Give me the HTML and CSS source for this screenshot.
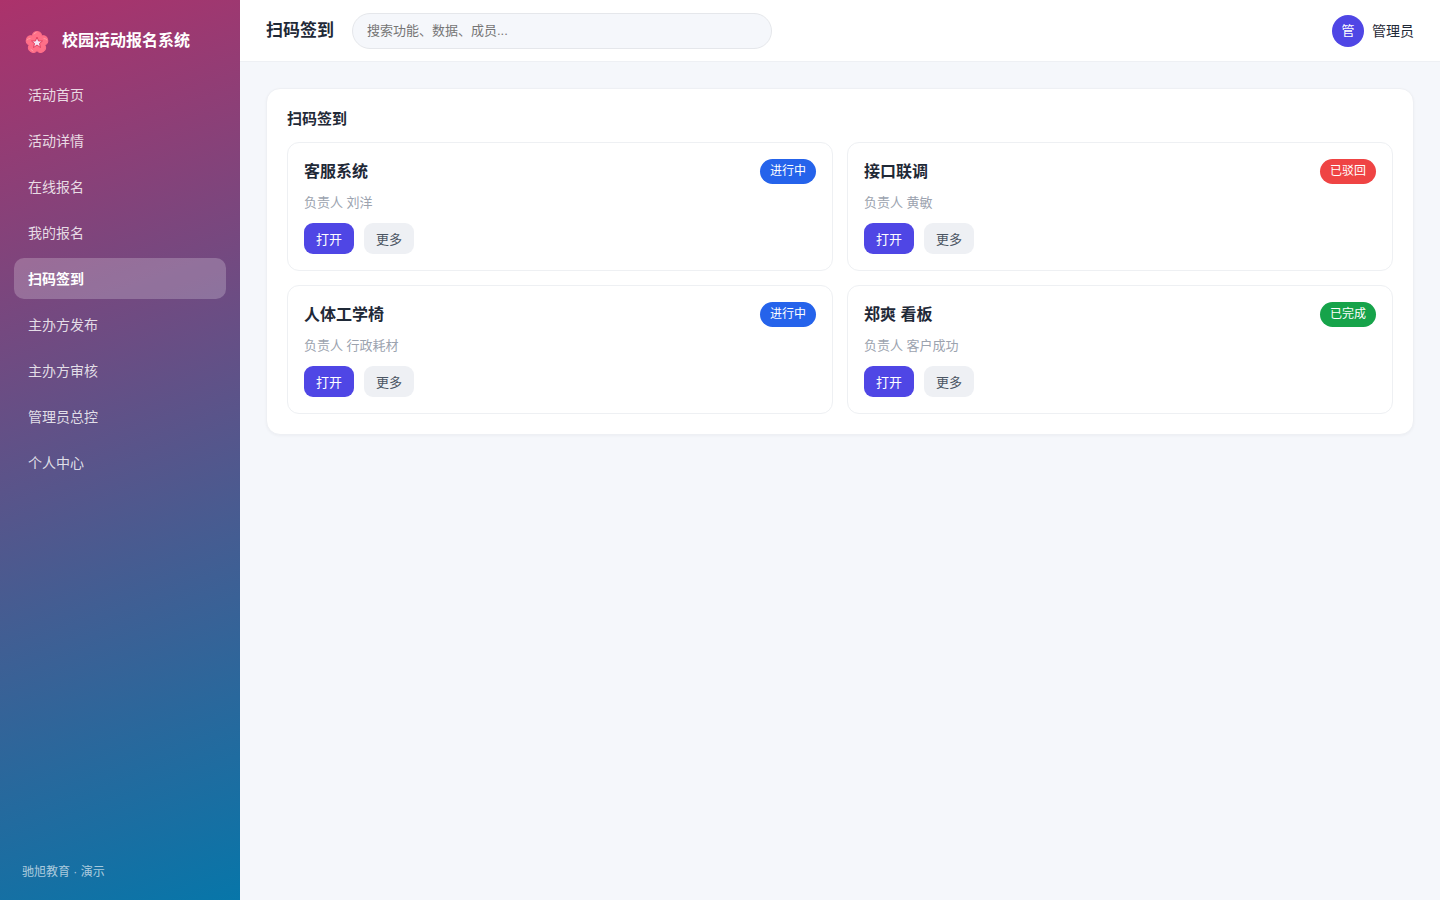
FILE: index.html
```
<!DOCTYPE html>
<html lang="zh-CN">
<head>
    <meta charset="UTF-8">
    <meta name="viewport" content="width=device-width, initial-scale=1.0">
    <title>扫码签到 - 校园活动报名系统</title>
    <link rel="stylesheet" href="styles.css">
</head>
<body>
    <div class="layout">
        <aside class="sidebar">
            <div class="brand">
                <svg class="brand-logo" viewBox="0 0 24 24" aria-hidden="true">
                    <defs>
                        <path id="petal" d="M12 13 C8.500 11 6.500 7 7.500 4.500 C8 2.500 10 1.500 12 1.500 C14 1.500 16 2.500 16.500 4.500 C17.500 7 15.500 11 12 13Z"/>
                    </defs>
                    <g fill="#ff6f88" stroke="#ff6f88" stroke-width="1">
                        <use href="#petal"/>
                        <use href="#petal" transform="rotate(72 12 12.500)"/>
                        <use href="#petal" transform="rotate(144 12 12.500)"/>
                        <use href="#petal" transform="rotate(216 12 12.500)"/>
                        <use href="#petal" transform="rotate(288 12 12.500)"/>
                    </g>
                    <g fill="none" stroke="#ff9aa5" stroke-width="1" stroke-linecap="round">
                        <path d="M9 4 Q9.500 2.500 11 2.500"/>
                        <path d="M2 10 Q3 8.500 5 8.500"/>
                        <path d="M19 8.500 Q21 8.500 22 10"/>
                        <path d="M6 19.500 L8 21"/>
                    </g>
                    <path fill="#f6e4f5" stroke="#e23d5f" stroke-width="1" stroke-linejoin="round" d="M12 7 L13.500 11 L17.500 11 L14.500 13.500 L15.500 17.500 L12 15 L8.500 17.500 L9.500 13.500 L6.500 11 L10.500 11Z"/>
                </svg>
                <span>校园活动报名系统</span>
            </div>
            <nav class="nav">
                <a href="#" class="nav-item">活动首页</a>
                <a href="#" class="nav-item">活动详情</a>
                <a href="#" class="nav-item">在线报名</a>
                <a href="#" class="nav-item">我的报名</a>
                <a href="#" class="nav-item active">扫码签到</a>
                <a href="#" class="nav-item">主办方发布</a>
                <a href="#" class="nav-item">主办方审核</a>
                <a href="#" class="nav-item">管理员总控</a>
                <a href="#" class="nav-item">个人中心</a>
            </nav>
            <div class="sidebar-footer">驰旭教育 · 演示</div>
        </aside>

        <div class="main">
            <header class="topbar">
                <h1>扫码签到</h1>
                <input type="search" class="search" placeholder="搜索功能、数据、成员..." aria-label="搜索">
                <div class="user">
                    <span class="avatar">管</span>
                    <span>管理员</span>
                </div>
            </header>

            <main class="content">
                <section class="panel">
                    <h2>扫码签到</h2>
                    <div class="card-grid">
                        <article class="card">
                            <div class="card-head">
                                <h3>客服系统</h3>
                                <span class="badge blue">进行中</span>
                            </div>
                            <p class="owner">负责人 刘洋</p>
                            <div class="actions">
                                <button type="button" class="btn primary">打开</button>
                                <button type="button" class="btn">更多</button>
                            </div>
                        </article>
                        <article class="card">
                            <div class="card-head">
                                <h3>接口联调</h3>
                                <span class="badge red">已驳回</span>
                            </div>
                            <p class="owner">负责人 黄敏</p>
                            <div class="actions">
                                <button type="button" class="btn primary">打开</button>
                                <button type="button" class="btn">更多</button>
                            </div>
                        </article>
                        <article class="card">
                            <div class="card-head">
                                <h3>人体工学椅</h3>
                                <span class="badge blue">进行中</span>
                            </div>
                            <p class="owner">负责人 行政耗材</p>
                            <div class="actions">
                                <button type="button" class="btn primary">打开</button>
                                <button type="button" class="btn">更多</button>
                            </div>
                        </article>
                        <article class="card">
                            <div class="card-head">
                                <h3>郑爽 看板</h3>
                                <span class="badge green">已完成</span>
                            </div>
                            <p class="owner">负责人 客户成功</p>
                            <div class="actions">
                                <button type="button" class="btn primary">打开</button>
                                <button type="button" class="btn">更多</button>
                            </div>
                        </article>
                    </div>
                </section>
            </main>
        </div>
    </div>
</body>
</html>
```

FILE: styles.css
```
* {
    box-sizing: border-box;
}
body {
    margin: 0;
    font-family: "Liberation Sans", "Noto Sans CJK SC", sans-serif;
    font-size: 14px;
    line-height: 20px;
    color: #1f2937;
    background: #f5f7fb;
}
h1, h2, h3, p {
    margin: 0;
}
.layout {
    display: flex;
    min-height: 100vh;
}

/* Sidebar */
.sidebar {
    display: flex;
    flex-direction: column;
    flex: 0 0 240px;
    padding: 22px 14px 18px;
    color: #fff;
    background: linear-gradient(160deg, #ac326b, #0776a9);
}
.brand {
    display: flex;
    align-items: center;
    gap: 13px;
    height: 38px;
    margin-bottom: 14px;
    padding: 0 11px;
    font-size: 16px;
    font-weight: 700;
}
.brand-logo {
    width: 24px;
    height: 24px;
    margin-top: 2px;
}
.nav {
    display: flex;
    flex-direction: column;
    gap: 5px;
}
.nav-item {
    height: 41px;
    padding: 0 14px;
    line-height: 43px;
    color: rgba(255, 255, 255, 0.82);
    text-decoration: none;
    border-radius: 10px;
}
.nav-item.active {
    color: #fff;
    font-weight: 700;
    background: rgba(255, 255, 255, 0.22);
}
.sidebar-footer {
    margin-top: auto;
    padding: 0 8px;
    font-size: 12px;
    color: rgba(255, 255, 255, 0.65);
}

/* Top bar */
.main {
    flex: 1;
    min-width: 0;
}
.topbar {
    display: flex;
    align-items: center;
    gap: 18px;
    height: 62px;
    padding: 0 26px;
    background: #fff;
    border-bottom: 1px solid #eef0f4;
}
.topbar h1 {
    font-size: 17px;
    font-weight: 700;
    line-height: 21px;
}
.search {
    width: 420px;
    height: 36px;
    padding: 0 14px;
    font: inherit;
    font-size: 13px;
    color: inherit;
    background: #f5f7fb;
    border: 1px solid #e5e7eb;
    border-radius: 18px;
    outline: none;
}
.search::placeholder {
    color: #757575;
}
.user {
    display: flex;
    align-items: center;
    gap: 8px;
    margin-left: auto;
}
.avatar {
    width: 32px;
    height: 32px;
    font-size: 13px;
    line-height: 32px;
    text-align: center;
    color: #fff;
    background: #4f46e5;
    border-radius: 50%;
}

/* Content */
.content {
    padding: 26px;
}
.panel {
    padding: 20px;
    background: #fff;
    border: 1px solid #eef0f4;
    border-radius: 14px;
    box-shadow: 0 1px 3px rgba(16, 24, 40, 0.04);
}
.panel h2 {
    margin-bottom: 13px;
    font-size: 15px;
    font-weight: 700;
}
.card-grid {
    display: grid;
    grid-template-columns: 1fr 1fr;
    gap: 14px;
}
.card {
    padding: 16px;
    border: 1px solid #eef0f3;
    border-radius: 12px;
}
.card-head {
    display: flex;
    align-items: center;
    justify-content: space-between;
}
.card h3 {
    font-size: 16px;
    font-weight: 700;
    line-height: 25px;
}
.badge {
    padding: 0 10px;
    font-size: 12px;
    line-height: 25px;
    color: #fff;
    border-radius: 13px;
}
.badge.blue {
    background: #2563eb;
}
.badge.red {
    background: #ef4444;
}
.badge.green {
    background: #16a34a;
}
.owner {
    margin: 9px 0 10px;
    font-size: 13px;
    color: #9ca3af;
}
.actions {
    display: flex;
    gap: 10px;
}
.btn {
    height: 31px;
    padding: 0 12px;
    font-family: inherit;
    font-size: 13px;
    color: #4b5563;
    background: #eef0f4;
    border: none;
    border-radius: 9px;
    cursor: pointer;
}
.btn.primary {
    color: #fff;
    background: #4f46e5;
}
```
